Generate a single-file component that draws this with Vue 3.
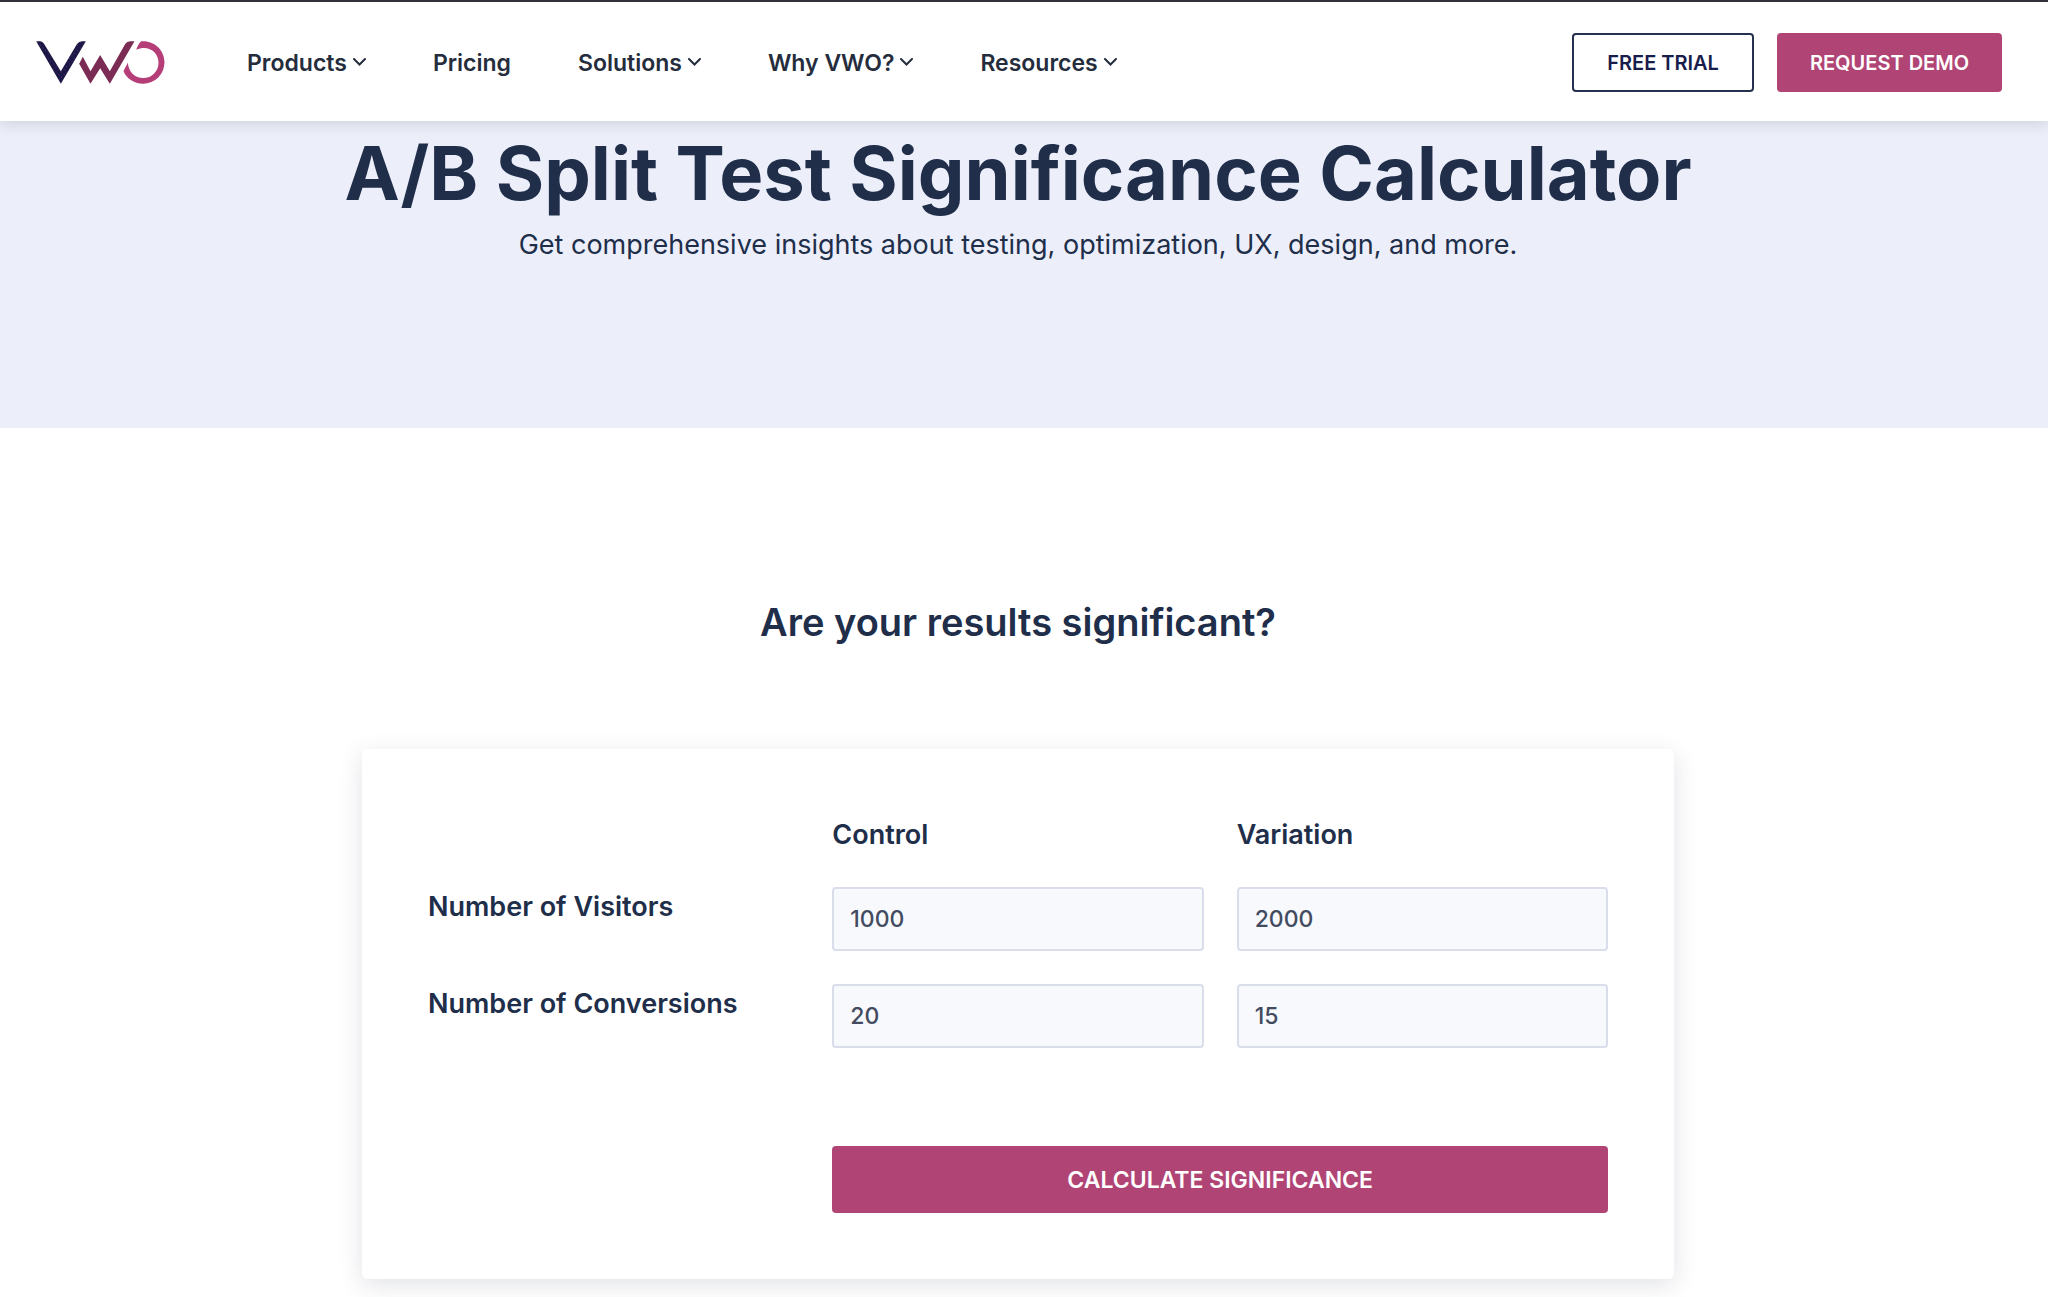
<script setup>
import { reactive } from 'vue'

const navItems = [
  { label: 'Products', menu: true },
  { label: 'Pricing', menu: false },
  { label: 'Solutions', menu: true },
  { label: 'Why VWO?', menu: true },
  { label: 'Resources', menu: true },
]

const variants = [
  { key: 'control', label: 'Control' },
  { key: 'variation', label: 'Variation' },
]

const rows = reactive([
  { key: 'visitors', label: 'Number of Visitors', control: '1000', variation: '2000' },
  { key: 'conversions', label: 'Number of Conversions', control: '20', variation: '15' },
])
</script>

<template>
  <div class="page">
    <header class="site-header">
      <a class="logo" href="#" aria-label="VWO">
        <svg viewBox="48 47 386 129" width="129" height="43" aria-hidden="true">
          <defs>
            <pattern id="logo-dots" width="16" height="16" patternUnits="userSpaceOnUse">
              <rect width="16" height="16" fill="#191847" />
              <circle cx="4" cy="4" r="1.6" fill="#8e2a63" />
              <circle cx="12" cy="12" r="1.6" fill="#8e2a63" />
            </pattern>
          </defs>
          <path fill="url(#logo-dots)" d="M48 48H60Q68 49 72 56L122 138L170 57Q176 48 186 48H197L122 175Z" />
          <path fill="#7a2c55" d="M188 94L211 138L240 89L269 138L315 56Q320 48 330 48H343L269 175L240 129L211 175L177 115Z" />
          <path fill="#b53d78" d="M363 48C400 44 433 73 433 111A64 64 0 0 1 369 175C341 175 318 159 310 137L323 112C325 140 345 158 369 158A46 46 0 0 0 415 111C415 82 386 57 348 73C352 62 357 53 363 48Z" />
        </svg>
      </a>
      <nav class="nav" aria-label="Main">
        <a v-for="item in navItems" :key="item.label" class="nav-link" href="#">
          {{ item.label }}
          <svg v-if="item.menu" class="chevron" viewBox="0 0 13 9" width="13" height="9" aria-hidden="true">
            <path d="M1 1L6.5 6.5L12 1" fill="none" stroke="currentColor" stroke-width="2" stroke-linecap="round" />
          </svg>
        </a>
      </nav>
      <div class="actions">
        <button class="btn btn-outline" type="button">FREE TRIAL</button>
        <button class="btn btn-primary" type="button">REQUEST DEMO</button>
      </div>
    </header>

    <section class="hero">
      <h1>A/B Split Test Significance Calculator</h1>
      <p>Get comprehensive insights about testing, optimization, UX, design, and more.</p>
    </section>

    <main class="content">
      <h2>Are your results significant?</h2>
      <form class="card" @submit.prevent>
        <div class="grid-row">
          <span></span>
          <span v-for="v in variants" :id="v.key" :key="v.key" class="label">{{ v.label }}</span>
        </div>
        <div v-for="row in rows" :key="row.key" class="grid-row">
          <label :id="row.key" class="label" :for="`${row.key}-control`">{{ row.label }}</label>
          <input
            v-for="v in variants"
            :id="`${row.key}-${v.key}`"
            :key="v.key"
            v-model="row[v.key]"
            class="field"
            type="text"
            inputmode="numeric"
            :aria-labelledby="`${row.key} ${v.key}`"
          />
        </div>
        <div class="grid-row submit-row">
          <button class="btn-primary submit" type="submit">CALCULATE SIGNIFICANCE</button>
        </div>
      </form>
    </main>
  </div>
</template>

<style>
body {
  background: #fff;
}
</style>

<style scoped>
.page {
  font-family: Inter, "Liberation Sans", sans-serif;
  color: #202e4a;
}

.site-header {
  position: relative;
  display: flex;
  align-items: center;
  height: 117px;
  padding: 2px 46px 0 36px;
  border-top: 2px solid #332f39;
  background: #fff;
  box-shadow: 0 2px 14px rgba(60, 60, 60, 0.18);
}

.logo,
.logo svg {
  display: block;
}

.nav {
  display: flex;
  gap: 67px;
  margin-left: 82px;
}

.nav-link {
  display: flex;
  align-items: center;
  gap: 6px;
  color: #252d3d;
  font-size: 23px;
  font-weight: 600;
  line-height: 32px;
  text-decoration: none;
  white-space: nowrap;
}

.actions {
  display: flex;
  gap: 23px;
  margin-left: auto;
}

button {
  font-family: inherit;
  font-weight: 600;
  border: 0;
  border-radius: 4px;
  white-space: nowrap;
}

.btn {
  height: 59px;
  padding: 0 33px;
  font-size: 20px;
}

.btn-outline {
  border: 2px solid #26304f;
  background: #fff;
  color: #191d4c;
}

.btn-primary {
  background: #b04474;
  color: #fff;
}

.hero {
  padding: 8px 12px 165px 0;
  background: #eceefa;
  text-align: center;
}

h1,
h2,
p {
  margin: 0;
}

h1 {
  font-size: 74px;
  font-weight: 700;
  line-height: 88px;
}

.hero p {
  padding-top: 10px;
  font-size: 27px;
  line-height: 36px;
}

.content {
  padding: 170px 12px 18px 0;
}

h2 {
  font-size: 38px;
  font-weight: 600;
  line-height: 48px;
  text-align: center;
}

.card {
  box-sizing: border-box;
  max-width: 1312px;
  margin: 103px auto 0;
  padding: 66px;
  border-radius: 6px;
  background: #fff;
  box-shadow: 0 6px 24px rgba(40, 50, 80, 0.14);
}

.grid-row {
  display: grid;
  grid-template-columns: repeat(3, minmax(0, 1fr));
  column-gap: 33px;
  margin-bottom: 33px;
}

.label {
  font-size: 27px;
  font-weight: 600;
  line-height: 39px;
}

.field {
  box-sizing: border-box;
  width: 100%;
  height: 64px;
  padding: 0 16px;
  border: 2px solid #dadeea;
  border-radius: 4px;
  background: #f8f9fd;
  color: #434b60;
  font-family: inherit;
  font-size: 23px;
  font-weight: 500;
}

.submit-row {
  margin: 98px 0 0;
}

.submit {
  grid-column: 2 / 4;
  height: 67px;
  font-size: 23px;
}
</style>
